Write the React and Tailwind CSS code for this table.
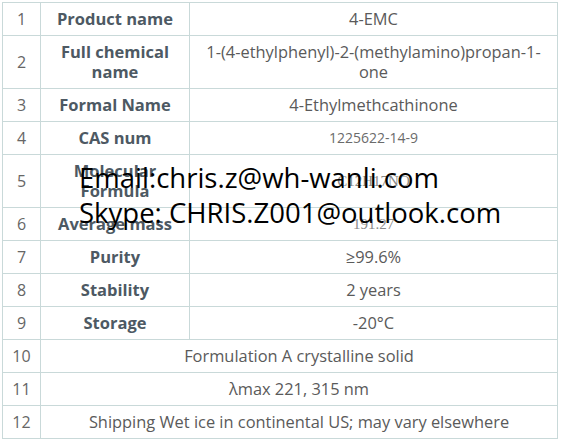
const ROWS = [
  { n: 1, label: 'Product name', value: '4-EMC' },
  { n: 2, label: ['Full chemical', 'name'], value: ['1-(4-ethylphenyl)-2-(methylamino)propan-1-', 'one'], tall: true },
  { n: 3, label: 'Formal Name', value: '4-Ethylmethcathinone' },
  { n: 4, label: 'CAS num', value: '1225622-14-9', small: true },
  { n: 5, label: ['Molecular', 'Formula'], value: 'C12H17NO', tall: true, small: true, fine: true },
  { n: 6, label: 'Average mass', value: '191.27', small: true, fine: true },
  { n: 7, label: 'Purity', value: '≥99.6%' },
  { n: 8, label: 'Stability', value: '2 years' },
  { n: 9, label: 'Storage', value: '-20°C' },
  { n: 10, wide: 'Formulation A crystalline solid' },
  { n: 11, wide: 'λmax 221, 315 nm' },
  { n: 12, wide: 'Shipping Wet ice in continental US; may vary elsewhere' },
];

function Lines({ text }) {
  if (!Array.isArray(text)) return text;
  return text.map((t, i) => (
    <span key={i} className="block">{t}</span>
  ));
}

export default function App() {
  return (
    <div
      className="relative w-[563px] h-[439px] bg-white overflow-hidden"
      style={{ fontFamily: '"Open Sans", "Noto Sans", sans-serif' }}
    >
      <div className="ml-[2px] mt-[2px] w-[556px] grid grid-cols-[37px_148px_367px] gap-px p-px bg-[#c9d9d9]">
        {ROWS.map(r => {
          const h = r.tall ? 'h-[52px]' : 'h-[32px]';
          return [
            <div key={r.n + 'n'} className={`${h} bg-white flex items-center justify-center text-[16px] text-[#666]`}>
              {r.n}
            </div>,
            r.wide ? (
              <div key={r.n + 'w'} className={`${h} col-span-2 bg-white flex items-center justify-center text-[16.4px] text-[#5a5a5a]`}>
                {r.wide}
              </div>
            ) : (
              [
                <div key={r.n + 'l'} className={`${h} bg-white flex flex-col items-center justify-center text-center text-[16.5px] leading-[20px] font-bold text-[#4d5963]`}>
                  <Lines text={r.label} />
                </div>,
                <div
                  key={r.n + 'v'}
                  className={`${h} bg-white flex flex-col items-center justify-center text-center leading-[20px] ${r.small ? 'text-[14px] text-[#6b6b6b]' : 'text-[16.4px] text-[#5a5a5a]'}`}
                  style={r.fine ? { fontFamily: '"Liberation Serif", serif', fontSize: 15, color: '#8a8a8a' } : undefined}
                >
                  <Lines text={r.value} />
                </div>,
              ]
            ),
          ];
        })}
      </div>

      {/* watermark contact text */}
      <div className="absolute left-[79px] top-[160px] text-[27.5px] leading-[35px] text-black whitespace-nowrap">
        <div>Email:chris.z@wh-wanli.com</div>
        <div>Skype: CHRIS.Z001@outlook.com</div>
      </div>
    </div>
  );
}
